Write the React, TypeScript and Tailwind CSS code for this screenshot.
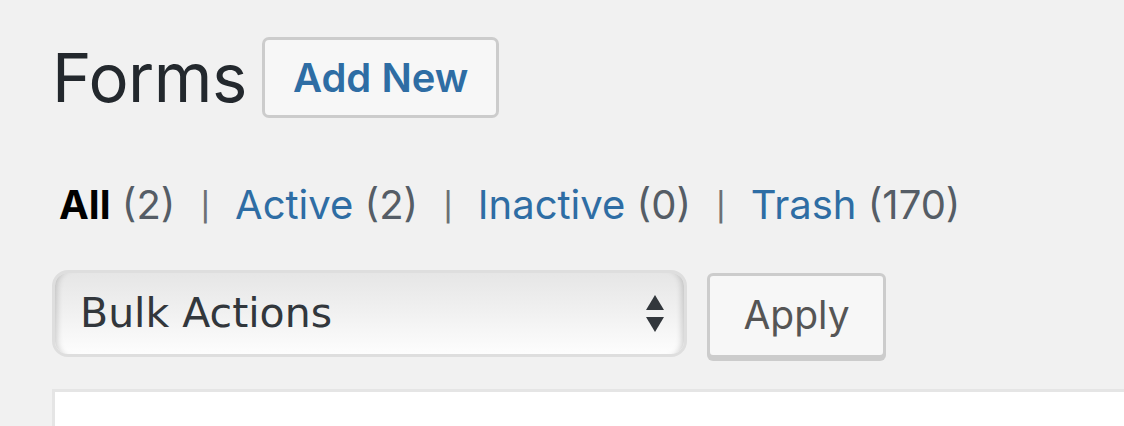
import React from "react";

const font = { fontFamily: "Inter, 'Liberation Sans', sans-serif" };

export default function App() {
  const links = [
    { label: "All", count: 2, current: true },
    { label: "Active", count: 2 },
    { label: "Inactive", count: 0 },
    { label: "Trash", count: 170 },
  ];

  return (
    <div className="w-full h-[426px] overflow-hidden bg-[#f1f1f1] pl-[52px]" style={font}>
      {/* Title */}
      <div className="flex items-center pt-[37px]">
        <h1 className="text-[67px] leading-[81px] text-[#23282d] font-normal tracking-[-0.5px]">Forms</h1>
        <button className="ml-[15px] h-[81px] px-[28px] rounded-[7px] border-[3px] border-[#cccccc] bg-[#f7f7f7] text-[40px] font-semibold text-[#2e6da4]">
          Add New
        </button>
      </div>

      {/* Status links */}
      <ul className="flex items-center mt-[61px] ml-[7px] text-[40px] leading-[48px] text-[#555d66]">
        {links.map((l, i) => (
          <li key={l.label} className="flex items-center whitespace-pre">
            <span className={l.current ? "font-bold text-black" : "text-[#2e6da4]"}>{l.label}</span>
            <span>{` (${l.count})`}</span>
            {i < links.length - 1 && (
              <span className="mx-[25px] mt-[4px] text-[28px] font-medium text-[#6c7074]">|</span>
            )}
          </li>
        ))}
      </ul>

      {/* Bulk actions */}
      <div className="flex items-start mt-[39px]">
        <div className="relative w-[635px] h-[87px] rounded-[16px] border-[3px] border-[#dedede] bg-gradient-to-b from-[#e6e6e6] via-[#f1f1f1] to-[#fdfdfd] shadow-[inset_8px_0_6px_-6px_rgba(0,0,0,0.18),inset_-8px_0_6px_-6px_rgba(0,0,0,0.18)] flex items-center pl-[25px]">
          <span className="text-[41px] text-[#32373c]" style={{ fontFamily: "'DejaVu Sans', sans-serif" }}>
            Bulk Actions
          </span>
          <svg className="absolute right-[19px] top-[22px]" width="20" height="38" viewBox="0 0 20 38">
            <polygon points="10,0 19,15 1,15" fill="#32373c" />
            <polygon points="1,22 19,22 10,37" fill="#32373c" />
          </svg>
        </div>
        <button className="ml-[20px] mt-[3px] w-[179px] h-[85px] rounded-[6px] border-[3px] border-[#cccccc] bg-[#f7f7f7] shadow-[0_3px_0_#cccccc] text-[39px] text-[#555555]">
          Apply
        </button>
      </div>

      {/* Table panel */}
      <div className="mt-[31px] h-[60px] bg-white border-[3px] border-[#e5e5e5] border-r-0" />
    </div>
  );
}
